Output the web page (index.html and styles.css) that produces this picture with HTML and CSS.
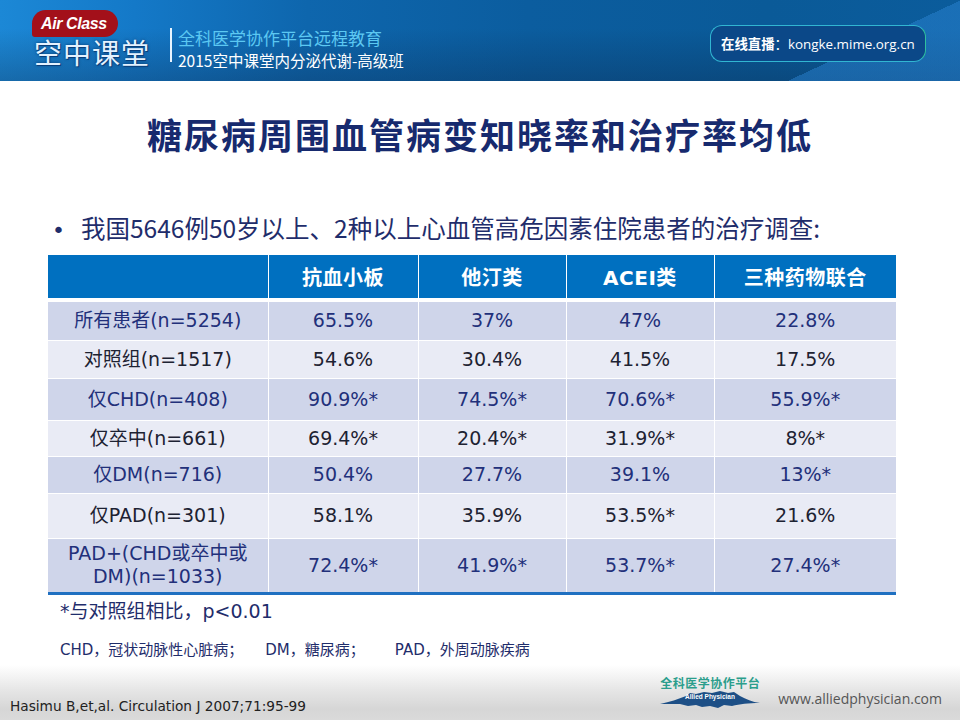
FILE: index.html
```html
<!DOCTYPE html>
<html lang="zh-CN">
<head>
<meta charset="utf-8">
<title>糖尿病周围血管病变知晓率和治疗率均低</title>
<link rel="stylesheet" href="styles.css">
</head>
<body>
<div class="slide">
  <header class="banner">
    <div class="logo">
      <div class="badge">Air Class</div>
      <div class="logo-cn">空中课堂</div>
    </div>
    <div class="divider"></div>
    <div class="course">
      <div class="course-1">全科医学协作平台远程教育</div>
      <div class="course-2">2015空中课堂内分泌代谢-高级班</div>
    </div>
    <div class="live"><b>在线直播</b>：kongke.mime.org.cn</div>
  </header>

  <main class="content">
    <h1 class="title">糖尿病周围血管病变知晓率和治疗率均低</h1>
    <p class="bullet"><span class="dot">•</span>我国5646例50岁以上、2种以上心血管高危因素住院患者的治疗调查:</p>
    <table class="data">
      <colgroup>
        <col class="c0"><col class="c1"><col class="c2"><col class="c3"><col class="c4">
      </colgroup>
      <thead>
        <tr class="hd"><th></th><th>抗血小板</th><th>他汀类</th><th>ACEI类</th><th>三种药物联合</th></tr>
      </thead>
      <tbody>
        <tr class="odd h40"><td>所有患者(n=5254)</td><td>65.5%</td><td>37%</td><td>47%</td><td>22.8%</td></tr>
        <tr class="even h38"><td>对照组(n=1517)</td><td>54.6%</td><td>30.4%</td><td>41.5%</td><td>17.5%</td></tr>
        <tr class="odd h42"><td>仅CHD(n=408)</td><td>90.9%*</td><td>74.5%*</td><td>70.6%*</td><td>55.9%*</td></tr>
        <tr class="even h36"><td>仅卒中(n=661)</td><td>69.4%*</td><td>20.4%*</td><td>31.9%*</td><td>8%*</td></tr>
        <tr class="odd h37"><td>仅DM(n=716)</td><td>50.4%</td><td>27.7%</td><td>39.1%</td><td>13%*</td></tr>
        <tr class="even h45"><td>仅PAD(n=301)</td><td>58.1%</td><td>35.9%</td><td>53.5%*</td><td>21.6%</td></tr>
        <tr class="odd h55 last"><td>PAD+(CHD或卒中或<br>DM)(n=1033)</td><td>72.4%*</td><td>41.9%*</td><td>53.7%*</td><td>27.4%*</td></tr>
      </tbody>
    </table>
    <p class="note">*与对照组相比，p&lt;0.01</p>
    <p class="abbr">CHD，冠状动脉性心脏病；<span class="sp1"></span>DM，糖尿病；<span class="sp2"></span>PAD，外周动脉疾病</p>
  </main>

  <footer class="footer">
    <div class="cite">Hasimu B,et,al. Circulation J 2007;71:95-99</div>
    <div class="brand">
      <div class="ap-logo">
        <div class="ap-cn">全科医学协作平台</div>
        <svg class="ap-mount" width="100" height="18" viewBox="0 0 100 18">
          <path d="M0 14 C10 12 18 9 26 6 L30 3 L36 4 L44 2 L52 3 L60 1 L68 3 L74 2 L80 6 C86 9 92 12 100 13 C88 13 80 14 72 16 L64 15 L58 18 L50 16 L42 17 L36 15 L28 16 L20 14 C12 14 6 14 0 14 Z" fill="#1d4f86"/>
          <text x="50" y="9" text-anchor="middle" font-family="Liberation Sans, sans-serif" font-size="6.5" font-weight="bold" fill="#ffffff">Allied Physician</text>
        </svg>
      </div>
      <div class="url">www.alliedphysician.com</div>
    </div>
  </footer>
</div>
</body>
</html>
```

FILE: styles.css
```css
html, body {
  margin: 0;
  padding: 0;
  background: #ffffff;
}

.slide {
  width: 960px;
  height: 720px;
  overflow: hidden;
  display: flex;
  flex-direction: column;
  font-family: "DejaVu Sans", "Noto Sans CJK SC", sans-serif;
}

/* ---------- banner ---------- */
.banner {
  height: 81px;
  flex: none;
  display: flex;
  align-items: flex-start;
  background:
    linear-gradient(155deg, rgba(0,0,0,0) 84.8%, rgba(45,135,215,0.45) 84.8%),
    linear-gradient(180deg, rgba(10,30,60,0) 35%, rgba(10,30,60,0.28) 100%),
    linear-gradient(90deg, #1c88d6 0%, #1479c8 14%, #0e66ad 32%, #0b5d9f 55%, #0a5a98 80%, #0b5c9c 100%);
}

.logo {
  margin-left: 32px;
  margin-top: 10px;
  display: flex;
  flex-direction: column;
  align-items: flex-start;
}

.badge {
  width: 86px;
  height: 27px;
  box-sizing: border-box;
  padding-left: 9px;
  background: #a3101a;
  border-radius: 14px 14px 14px 3px;
  color: #ffffff;
  font-family: "Liberation Sans", sans-serif;
  font-weight: bold;
  font-style: italic;
  font-size: 16px;
  line-height: 27px;
  letter-spacing: -0.4px;
}

.logo-cn {
  margin-top: -1px;
  margin-left: 2px;
  font-family: "Noto Sans CJK SC", sans-serif;
  font-size: 28px;
  line-height: 32px;
  letter-spacing: 1px;
  color: #e4f2ff;
  text-shadow: 1px 1px 0 #0a3f7a, 0 0 3px rgba(0,40,90,0.8);
}

.divider {
  width: 2px;
  height: 34px;
  margin-top: 28px;
  margin-left: 20px;
  background: #e8f4ff;
}

.course {
  margin-left: 6px;
  margin-top: 26px;
  font-family: "Noto Sans CJK SC", sans-serif;
}

.course-1 {
  font-size: 17px;
  line-height: 23px;
  color: #5cc8f2;
}

.course-2 {
  font-size: 15.5px;
  line-height: 22px;
  color: #ffffff;
}

.live {
  margin-left: auto;
  margin-right: 34px;
  margin-top: 25px;
  width: 216px;
  height: 37px;
  box-sizing: border-box;
  border: 1.5px solid #31b6d2;
  border-right-color: #2fc09e;
  border-radius: 12px;
  background: #0b4888;
  color: #ffffff;
  font-family: "Open Sans", "Noto Sans CJK SC", sans-serif;
  font-size: 13.4px;
  line-height: 34px;
  padding-left: 10px;
  white-space: nowrap;
}

.live b {
  font-family: "Noto Sans CJK SC", sans-serif;
  font-weight: bold;
}

/* ---------- content ---------- */
.content {
  flex: 1;
  padding-top: 33px;
}

.title {
  margin: 0;
  text-align: center;
  font-family: "Noto Sans CJK SC", sans-serif;
  font-weight: bold;
  font-size: 35px;
  line-height: 40px;
  letter-spacing: 2px;
  color: #172a6e;
}

.bullet {
  margin: 58px 0 0 0;
  padding-left: 52px;
  font-family: "Noto Sans CJK SC", sans-serif;
  font-size: 24.5px;
  line-height: 32px;
  color: #1f2d6b;
  white-space: nowrap;
}

.dot {
  display: inline-block;
  width: 29px;
  font-family: "DejaVu Sans", sans-serif;
  font-size: 22px;
}

.data {
  margin: 8px 0 0 48px;
  width: 848px;
  border-collapse: collapse;
  table-layout: fixed;
  border-bottom: 3px solid #1f70c1;
}

.c0 { width: 220px; }
.c1 { width: 150px; }
.c2 { width: 148px; }
.c3 { width: 148px; }
.c4 { width: 182px; }

.data th,
.data td {
  padding: 0;
  text-align: center;
  border-left: 1px solid #ffffff;
  border-top: 1px solid #ffffff;
}

.data th:first-child,
.data td:first-child {
  border-left: none;
}

.data th {
  height: 43px;
  background: #0070c0;
  color: #ffffff;
  font-weight: bold;
  font-size: 20px;
  border-top: none;
  border-bottom: 4px solid #ffffff;
  letter-spacing: 0.5px;
}

.data td {
  font-size: 19px;
  line-height: 23px;
}

.data tbody tr:first-child td {
  border-top: none;
}

.odd td {
  background: #cfd5ea;
  color: #22307a;
}

.even td {
  background: #e9ebf5;
  color: #1d2232;
}

.h40 { height: 40px; }
.h38 { height: 38px; }
.h42 { height: 42px; }
.h36 { height: 36px; }
.h37 { height: 37px; }
.h45 { height: 45px; }
.h55 { height: 55px; }

.note {
  margin: 2px 0 0 60px;
  font-size: 19px;
  line-height: 28px;
  color: #1f2d6b;
}

.abbr {
  margin: 13px 0 0 60px;
  font-size: 15px;
  line-height: 24px;
  color: #1f2d6b;
  white-space: nowrap;
}

.sp1 { display: inline-block; width: 22px; }
.sp2 { display: inline-block; width: 30px; }

/* ---------- footer ---------- */
.footer {
  height: 55px;
  flex: none;
  display: flex;
  justify-content: space-between;
  align-items: flex-end;
  background: linear-gradient(180deg, #ffffff 0%, #e6e6e6 45%, #d6d6d6 80%, #dadada 100%);
}

.cite {
  margin-left: 10px;
  margin-bottom: 6px;
  font-size: 13.7px;
  line-height: 16px;
  color: #222222;
}

.brand {
  display: flex;
  align-items: flex-end;
  margin-right: 18px;
  margin-bottom: 12px;
}

.ap-logo {
  display: flex;
  flex-direction: column;
  align-items: center;
  width: 100px;
}

.ap-cn {
  font-family: "Noto Sans CJK SC", sans-serif;
  font-weight: bold;
  font-size: 12px;
  line-height: 14px;
  color: #2b9e8c;
  letter-spacing: 0.5px;
}

.ap-mount {
  display: block;
}

.url {
  margin-left: 18px;
  font-family: "Open Sans", sans-serif;
  font-size: 14px;
  line-height: 18px;
  color: #555555;
}
```
